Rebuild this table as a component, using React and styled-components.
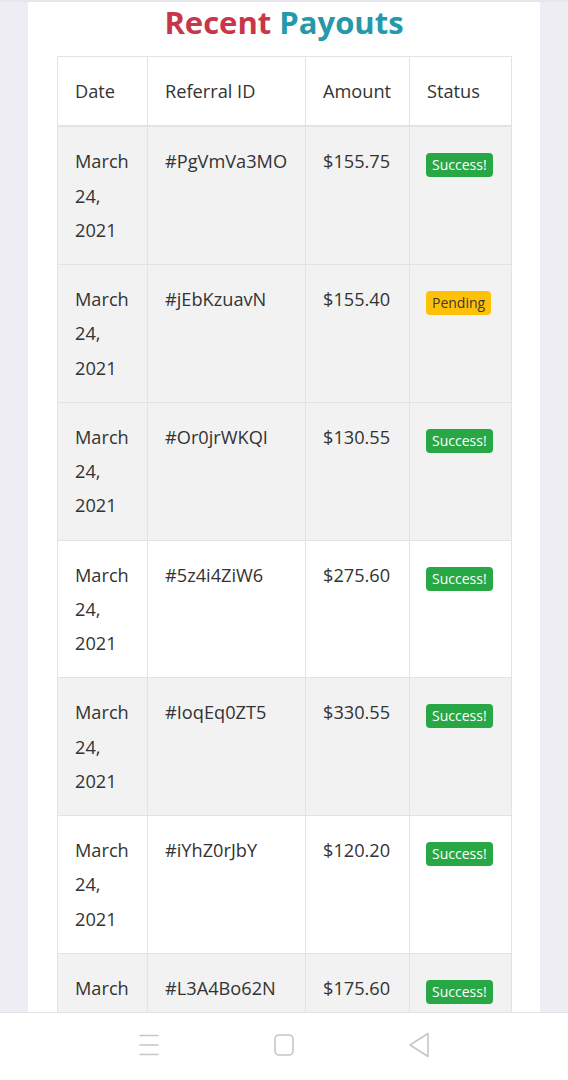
import React from 'react'
import styled, {createGlobalStyle} from 'styled-components'

const payouts = [
  {date: 'March 24, 2021', id: '#PgVmVa3MO', amount: '$155.75', status: 'success', shade: true},
  {date: 'March 24, 2021', id: '#jEbKzuavN', amount: '$155.40', status: 'pending', shade: true},
  {date: 'March 24, 2021', id: '#Or0jrWKQI', amount: '$130.55', status: 'success', shade: true},
  {date: 'March 24, 2021', id: '#5z4i4ZiW6', amount: '$275.60', status: 'success', shade: false},
  {date: 'March 24, 2021', id: '#IoqEq0ZT5', amount: '$330.55', status: 'success', shade: true},
  {date: 'March 24, 2021', id: '#iYhZ0rJbY', amount: '$120.20', status: 'success', shade: false},
  {date: 'March 24, 2021', id: '#L3A4Bo62N', amount: '$175.60', status: 'success', shade: true},
]

const App = () => {
  return (
    <Screen>
      <GlobalStyle />
      <Main>
        <Card>
          <Title>
            <span style={{color: '#c9364a'}}>Recent</span>{' '}
            <span style={{color: '#2399aa'}}>Payouts</span>
          </Title>
          <Table>
            <colgroup>
              <col width="90" />
              <col width="158" />
              <col width="104" />
              <col width="102" />
            </colgroup>
            <thead>
              <tr>
                <Th>Date</Th>
                <Th>Referral ID</Th>
                <Th>Amount</Th>
                <Th>Status</Th>
              </tr>
            </thead>
            <tbody>
              {payouts.map((p, i) => (
                <Row key={i} $shade={p.shade}>
                  <Td>{p.date}</Td>
                  <Td>{p.id}</Td>
                  <Td>{p.amount}</Td>
                  <Td>
                    <Badge $status={p.status}>
                      {p.status === 'success' ? 'Success!' : 'Pending'}
                    </Badge>
                  </Td>
                </Row>
              ))}
            </tbody>
          </Table>
        </Card>
      </Main>
      <NavBar>
        <svg width="22" height="24" viewBox="0 0 22 24" fill="none" stroke="#c6c6cb" strokeWidth="1.6" strokeLinecap="round">
          <path d="M2 2.5h18M2 12h18M2 21.5h18" />
        </svg>
        <svg width="22" height="24" viewBox="0 0 22 24" fill="none" stroke="#c6c6cb" strokeWidth="1.6">
          <rect x="2" y="2" width="18" height="20" rx="4" />
        </svg>
        <svg width="22" height="26" viewBox="0 0 22 26" fill="none" stroke="#c6c6cb" strokeWidth="1.6" strokeLinejoin="round">
          <path d="M20 1.5v23L2 13z" />
        </svg>
      </NavBar>
    </Screen>
  )
}

export default App

const GlobalStyle = createGlobalStyle`
  html, body {
    margin: 0;
    padding: 0;
  }
  body {
    font-family: "Open Sans", "Liberation Sans", sans-serif;
    color: #333;
  }
`

const Screen = styled.div`
  height: 1080px;
  display: flex;
  flex-direction: column;
  overflow: hidden;
`

const Main = styled.div`
  flex: 1;
  min-height: 0;
  overflow: hidden;
  background-color: #ededf3;
  border-top: 2px solid #e6e6ec;
  padding: 0 28px;
`

const Card = styled.div`
  background: #fff;
  padding: 0 29px;
  height: 100%;
`

const Title = styled.h2`
  margin: 0 0 14px;
  text-align: center;
  font-size: 31px;
  font-weight: 700;
  line-height: 40px;
`

const Table = styled.table`
  width: 454px;
  table-layout: fixed;
  border-collapse: collapse;
  font-size: 18.2px;
  line-height: 34.25px;
  color: #333;
`

const Th = styled.th`
  text-align: left;
  font-weight: 400;
  padding: 17px 17px;
  border: 1px solid #e2e3e6;
  border-bottom: 2px solid #e2e3e6;
  vertical-align: top;
`

const Row = styled.tr`
  background: ${p => (p.$shade ? '#f2f2f2' : '#fff')};
`

const Td = styled.td`
  padding: 17px 17px;
  border: 1px solid #e2e3e6;
  vertical-align: top;
`

const Badge = styled.span`
  display: inline-block;
  vertical-align: -2px;
  padding: 3px 6px;
  border-radius: 4px;
  font-size: 14px;
  line-height: 18px;
  margin-left: -1px;
  background: ${p => (p.$status === 'success' ? '#28a745' : '#ffc107')};
  color: ${p => (p.$status === 'success' ? '#fff' : '#3a3a3a')};
`

const NavBar = styled.div`
  height: 68px;
  flex-shrink: 0;
  background: #fff;
  border-top: 1px solid #e3e3e6;
  display: flex;
  align-items: center;
  justify-content: center;
  gap: 113px;
  padding-bottom: 4px;
  box-sizing: border-box;
`
